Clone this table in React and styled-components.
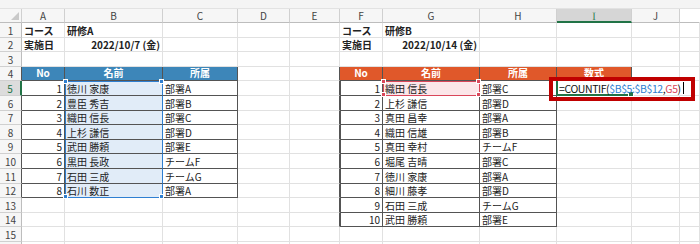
import React from 'react'
import styled, { createGlobalStyle } from 'styled-components'

const GlobalStyle = createGlobalStyle`
  html, body { margin: 0; padding: 0; background: #fff; }
  body { font-family: "Noto Sans CJK JP", "Noto Sans", sans-serif; }
`

/* sizes */
const WIDTHS = [22, 43, 98, 75, 52, 50, 43, 97, 77, 75, 48, 20]
const HEIGHTS = [15, 14, 15, 14, 15, 15, 14, 15, 14, 15, 15, 14, 15, 14, 15, 15]
const LETTERS = ['', 'A', 'B', 'C', 'D', 'E', 'F', 'G', 'H', 'I', 'J', '']

/* colours */
const DARK = '#545454'
const GRID = '#e1e1e1'
const HEAD_LINE = '#d0d0d0'
const GREEN = '#217346'
const HEADS = { blue: '#3d86b9', orange: '#e0582a' }
const RANGES = {
  blue: { line: '#2f7fd1', fill: '#e1ecf8' },
  red: { line: '#d9465a', fill: '#fbe6e9' },
}

const Page = styled.div`
  width: 700px;
  height: 244px;
  overflow: hidden;
  background: #fff;
`

const TopStrip = styled.div`
  height: 9px;
  background: #f4f4f4;
  border-bottom: 1px solid #e2e2e2;
  box-sizing: border-box;
`

const Sheet = styled.div`
  position: relative;
  display: grid;
  grid-template-columns: ${WIDTHS.map(w => w + 'px').join(' ')};
  grid-template-rows: 14px ${HEIGHTS.map(h => h + 'px').join(' ')};
  font-size: 10px;
  color: #222;
`

const Corner = styled.div`
  position: relative;
  background: #f6f6f6;
  border-right: 1px solid ${HEAD_LINE};
  border-bottom: 1px solid #bdbdbd;
  box-sizing: border-box;

  &::after {
    content: '';
    position: absolute;
    right: 2px;
    bottom: 2px;
    border-style: solid;
    border-width: 0 0 8px 8px;
    border-color: transparent transparent #c9c9c9 transparent;
  }
`

const ColHead = styled.div`
  box-sizing: border-box;
  display: flex;
  align-items: center;
  justify-content: center;
  background: ${p => p.$active ? '#d6d6d6' : p.$blank ? '#fff' : '#f6f6f6'};
  border-right: 1px solid ${p => p.$blank ? '#fff' : HEAD_LINE};
  border-bottom: ${p => p.$active ? `2px solid ${GREEN}` : '1px solid #bdbdbd'};
  color: ${p => p.$active ? GREEN : '#444'};
  font-family: ${p => p.$active ? '"Noto Serif CJK JP", ' : ''}"Noto Sans CJK JP", sans-serif;
  font-size: 10px;
`

const RowHead = styled.div`
  box-sizing: border-box;
  display: flex;
  align-items: center;
  justify-content: center;
  background: ${p => p.$active ? '#dcdcdc' : '#f6f6f6'};
  border-right: ${p => p.$active ? `2px solid ${GREEN}` : `1px solid ${p.$dark ? DARK : '#bdbdbd'}`};
  border-bottom: 1px solid ${HEAD_LINE};
  color: ${p => p.$active ? GREEN : '#444'};
  font-size: 10px;
`

const Cell = styled.div`
  position: relative;
  box-sizing: border-box;
  display: flex;
  align-items: center;
  justify-content: ${p => p.$align === 'right' ? 'flex-end' : p.$align === 'center' ? 'center' : 'flex-start'};
  padding: ${p => p.$head ? '0 2px 2px' : '0 2px'};
  white-space: nowrap;
  font-weight: ${p => p.$bold ? 700 : 400};
  color: ${p => p.$head ? '#fff' : '#222'};
  background: ${p => p.$head ? HEADS[p.$head] : p.$range ? RANGES[p.$range].fill : '#fff'};
  border-right: 1px solid ${p =>
    p.$open ? 'transparent' : p.$range ? RANGES[p.$range].line : p.$rd ? DARK : GRID};
  border-bottom: 1px solid ${p =>
    p.$range && p.$last ? RANGES[p.$range].line : p.$bd ? DARK : GRID};
  box-shadow: ${p => {
    const s = []
    if (p.$range) s.push(`inset 1px 0 0 ${RANGES[p.$range].line}`)
    if (p.$range && p.$first) s.push(`inset 0 1px 0 ${RANGES[p.$range].line}`)
    if (p.$edge) s.push(`inset 1px 0 0 ${DARK}`)
    return s.length ? s.join(', ') : 'none'
  }};
  z-index: ${p => p.$active ? 2 : p.$range ? 1 : 0};
`

const Handle = styled.span`
  position: absolute;
  width: 3px;
  height: 3px;
  background: ${p => p.$color};
  border: 1px solid #fff;
  ${p => p.$v}: -2px;
  ${p => p.$h}: -2px;
  z-index: 3;
`

const ActiveMark = styled.span`
  position: absolute;
  left: -1px;
  top: 0;
  bottom: -1px;
  right: 0;
  border-left: 2px solid ${GREEN};
  border-bottom: 2px solid ${GREEN};
  pointer-events: none;

  &::after {
    content: '';
    position: absolute;
    right: -3px;
    bottom: -3px;
    width: 4px;
    height: 4px;
    background: ${GREEN};
    border: 1px solid #fff;
  }
`

const Formula = styled.span`
  font-size: 10.5px;
  letter-spacing: -0.4px;
  color: #111;
  display: flex;
  align-items: center;
  position: relative;
  z-index: 1;
`

const Ref = styled.span`
  color: ${p => RANGES[p.$range].line};
`

const Caret = styled.span`
  display: inline-block;
  width: 1px;
  height: 12px;
  margin-left: 2px;
  background: #000;
`

const Callout = styled.div`
  position: absolute;
  left: 549px;
  top: 68px;
  width: 146px;
  height: 24px;
  box-sizing: border-box;
  border: 4px solid #c00000;
  pointer-events: none;
  z-index: 5;
`

const LEFT = [
  ['1', '徳川 家康', '部署A'],
  ['2', '豊臣 秀吉', '部署B'],
  ['3', '織田 信長', '部署C'],
  ['4', '上杉 謙信', '部署D'],
  ['5', '武田 勝頼', '部署E'],
  ['6', '黒田 長政', 'チームF'],
  ['7', '石田 三成', 'チームG'],
  ['8', '石川 数正', '部署A'],
]

const RIGHT = [
  ['1', '織田 信長', '部署C'],
  ['2', '上杉 謙信', '部署D'],
  ['3', '真田 昌幸', '部署A'],
  ['4', '織田 信雄', '部署B'],
  ['5', '真田 幸村', 'チームF'],
  ['6', '堀尾 吉晴', '部署C'],
  ['7', '徳川 家康', '部署A'],
  ['8', '細川 藤孝', '部署D'],
  ['9', '石田 三成', 'チームG'],
  ['10', '武田 勝頼', '部署E'],
]

const inTable = (r, c) =>
  (r >= 4 && r <= 12 && c >= 1 && c <= 3) ||
  (r === 4 && c >= 6 && c <= 9) ||
  (r >= 5 && r <= 14 && c >= 6 && c <= 8)

const headOf = (r, c) => {
  if (r !== 4) return null
  if (c >= 1 && c <= 3) return 'blue'
  if (c >= 6 && c <= 9) return 'orange'
  return null
}

const content = (r, c) => {
  const bold = { $bold: true }
  if (r === 1) {
    if (c === 1 || c === 6) return { text: 'コース', ...bold }
    if (c === 2) return { text: '研修A', ...bold }
    if (c === 7) return { text: '研修B', ...bold }
  }
  if (r === 2) {
    if (c === 1 || c === 6) return { text: '実施日', ...bold }
    if (c === 2) return { text: '2022/10/7 (金)', $align: 'right', ...bold }
    if (c === 7) return { text: '2022/10/14 (金)', $align: 'right', ...bold }
  }
  if (r === 4) {
    const heads = { 1: 'No', 2: '名前', 3: '所属', 6: 'No', 7: '名前', 8: '所属', 9: '数式' }
    if (heads[c]) return { text: heads[c], $align: 'center', ...bold }
  }
  if (r >= 5 && r <= 12 && c >= 1 && c <= 3) {
    const v = LEFT[r - 5][c - 1]
    return { text: v, $align: c === 1 ? 'right' : 'left' }
  }
  if (r >= 5 && r <= 14 && c >= 6 && c <= 8) {
    const v = RIGHT[r - 5][c - 6]
    return { text: v, $align: c === 6 ? 'right' : 'left' }
  }
  return { text: '' }
}

function GridCell({ r, c }) {
  const { text, ...rest } = content(r, c)
  const head = headOf(r, c)
  const blueRange = c === 2 && r >= 5 && r <= 12
  const redRange = c === 7 && r === 5
  const range = blueRange ? 'blue' : redRange ? 'red' : null
  const first = blueRange ? r === 5 : redRange
  const last = blueRange ? r === 12 : redRange
  const active = r === 5 && c === 9
  const open = r === 5 && (c === 9 || c === 10)

  const props = {
    ...rest,
    $head: head,
    $range: range,
    $first: first,
    $last: last,
    $active: active,
    $open: open,
    $rd: inTable(r, c) || inTable(r, c + 1),
    $bd: inTable(r, c) || (inTable(r + 1, c) && !headOf(r + 1, c)),
    $edge: inTable(r, c) && !head && c === 6,
  }

  const color = range ? RANGES[range].line : null

  return (
    <Cell {...props}>
      {active ? (
        <>
          <Formula>
            =COUNTIF(<Ref $range="blue">$B$5:$B$12</Ref>,<Ref $range="red">G5</Ref>)
            <Caret />
          </Formula>
          <ActiveMark />
        </>
      ) : text}
      {range && first && (
        <>
          <Handle $color={color} $v="top" $h="left" />
          <Handle $color={color} $v="top" $h="right" />
        </>
      )}
      {range && last && (
        <>
          <Handle $color={color} $v="bottom" $h="left" />
          <Handle $color={color} $v="bottom" $h="right" />
        </>
      )}
    </Cell>
  )
}

export default function App() {
  const rows = HEIGHTS.map((_, i) => i + 1)
  return (
    <Page>
      <GlobalStyle />
      <TopStrip />
      <Sheet>
        <Corner />
        {LETTERS.slice(1).map((l, i) => (
          <ColHead key={i} $active={l === 'I'} $blank={l === ''}>{l}</ColHead>
        ))}
        {rows.map(r => (
          <React.Fragment key={r}>
            <RowHead $active={r === 5} $dark={inTable(r, 1)}>{r <= 15 ? r : ''}</RowHead>
            {WIDTHS.slice(1).map((_, i) => (
              <GridCell key={i} r={r} c={i + 1} />
            ))}
          </React.Fragment>
        ))}
        <Callout />
      </Sheet>
    </Page>
  )
}
